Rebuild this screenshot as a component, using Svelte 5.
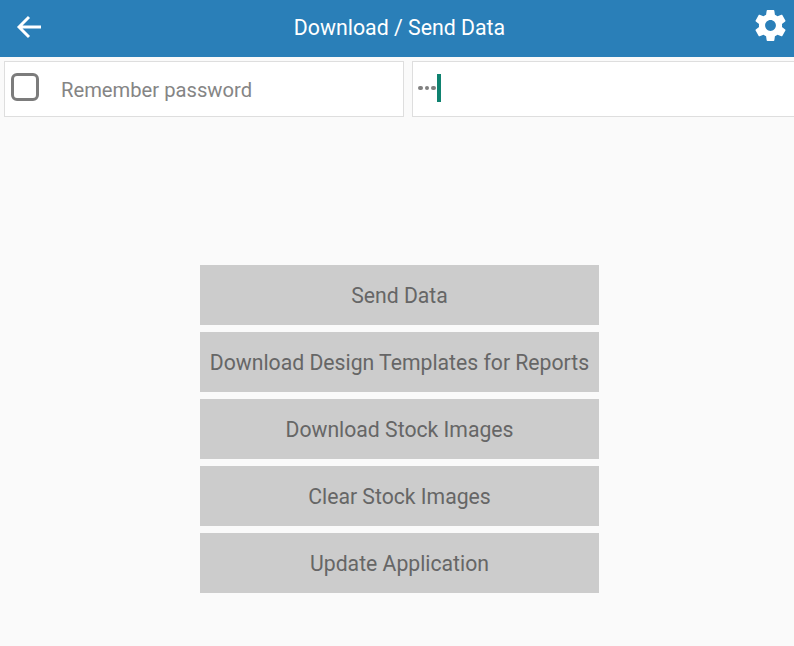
<script>
  const actions = [
    'Send Data',
    'Download Design Templates for Reports',
    'Download Stock Images',
    'Clear Stock Images',
    'Update Application'
  ];
</script>

<div class="page">
  <header class="header">
    <button class="icon back" aria-label="Back">
      <svg width="26" height="26" viewBox="0 0 26 26">
        <path d="M25 13H3.5M13 3L3 13l10 10" fill="none" stroke="#fff" stroke-width="2.9" />
      </svg>
    </button>
    <h1>Download / Send Data</h1>
    <button class="icon gear" aria-label="Settings">
      <svg width="37" height="37" viewBox="0 0 24 24">
        <path fill="#fff" d="M19.43 12.98c.04-.32.07-.64.07-.98s-.03-.66-.07-.98l2.11-1.65c.19-.15.24-.42.12-.64l-2-3.46c-.12-.22-.39-.3-.61-.22l-2.49 1c-.52-.4-1.08-.73-1.69-.98l-.38-2.65C14.46 2.18 14.25 2 14 2h-4c-.25 0-.46.18-.49.42l-.38 2.65c-.61.25-1.17.59-1.69.98l-2.49-1c-.23-.09-.49 0-.61.22l-2 3.46c-.13.22-.07.49.12.64l2.11 1.65c-.04.32-.07.65-.07.98s.03.66.07.98l-2.11 1.65c-.19.15-.24.42-.12.64l2 3.46c.12.22.39.3.61.22l2.49-1c.52.4 1.08.73 1.69.98l.38 2.65c.03.24.24.42.49.42h4c.25 0 .46-.18.49-.42l.38-2.65c.61-.25 1.17-.59 1.69-.98l2.49 1c.23.09.49 0 .61-.22l2-3.46c.12-.22.07-.49-.12-.64l-2.11-1.65zM12 15.5c-1.93 0-3.5-1.57-3.5-3.5s1.57-3.5 3.5-3.5 3.5 1.57 3.5 3.5-1.57 3.5-3.5 3.5z" />
      </svg>
    </button>
  </header>

  <div class="fields">
    <label class="field remember">
      <span class="checkbox"></span>
      <span class="label">Remember password</span>
    </label>
    <div class="field password">
      <span class="dots"><i></i><i></i><i></i></span>
      <span class="caret"></span>
    </div>
  </div>

  <div class="actions">
    {#each actions as action}
      <button class="action">{action}</button>
    {/each}
  </div>
</div>

<style>
  :global(body) {
    background: #fafafa;
  }

  .page {
    width: 794px;
    height: 646px;
    overflow: hidden;
    background: #fafafa;
    font-family: Roboto, "Liberation Sans", sans-serif;
  }

  .header {
    display: flex;
    align-items: center;
    justify-content: space-between;
    height: 57px;
    box-sizing: border-box;
    padding: 0 5px 4px 16px;
    background: #2a7fb8;
  }

  .header h1 {
    flex: 1;
    margin: 0;
    padding: 1px 0 0 5px;
    color: #fff;
    font-size: 21.3px;
    font-weight: 400;
    text-align: center;
  }

  .icon {
    display: flex;
    padding: 0;
    background: none;
    border: none;
  }

  .gear {
    margin-top: -2px;
  }

  .fields {
    display: grid;
    grid-template-columns: 400px 400px;
    gap: 8px;
    padding: 4px 0 0 4px;
  }

  .field {
    display: flex;
    align-items: center;
    height: 56px;
    box-sizing: border-box;
    background: #fff;
    border: 1px solid #dedede;
  }

  .remember {
    padding-left: 6px;
  }

  .checkbox {
    width: 28px;
    height: 28px;
    box-sizing: border-box;
    margin-top: -5px;
    border: 3px solid #7c7c7c;
    border-radius: 6px;
  }

  .label {
    margin-left: 22px;
    padding-top: 1px;
    color: #858585;
    font-size: 20.2px;
  }

  .password {
    padding-left: 5px;
  }

  .dots {
    display: flex;
    gap: 2px;
    margin-top: -2px;
  }

  .dots i {
    width: 4.5px;
    height: 4.5px;
    background: #808080;
    border-radius: 50%;
  }

  .caret {
    width: 4px;
    height: 28px;
    margin: -2px 0 0 1.5px;
    background: #0f8270;
  }

  .actions {
    display: flex;
    flex-direction: column;
    gap: 7px;
    width: 399px;
    margin: 148px 0 0 200px;
  }

  .action {
    height: 60px;
    padding: 1px 0 0;
    background: #cccccc;
    border: none;
    color: #666666;
    font-family: inherit;
    font-size: 21.2px;
  }
</style>
